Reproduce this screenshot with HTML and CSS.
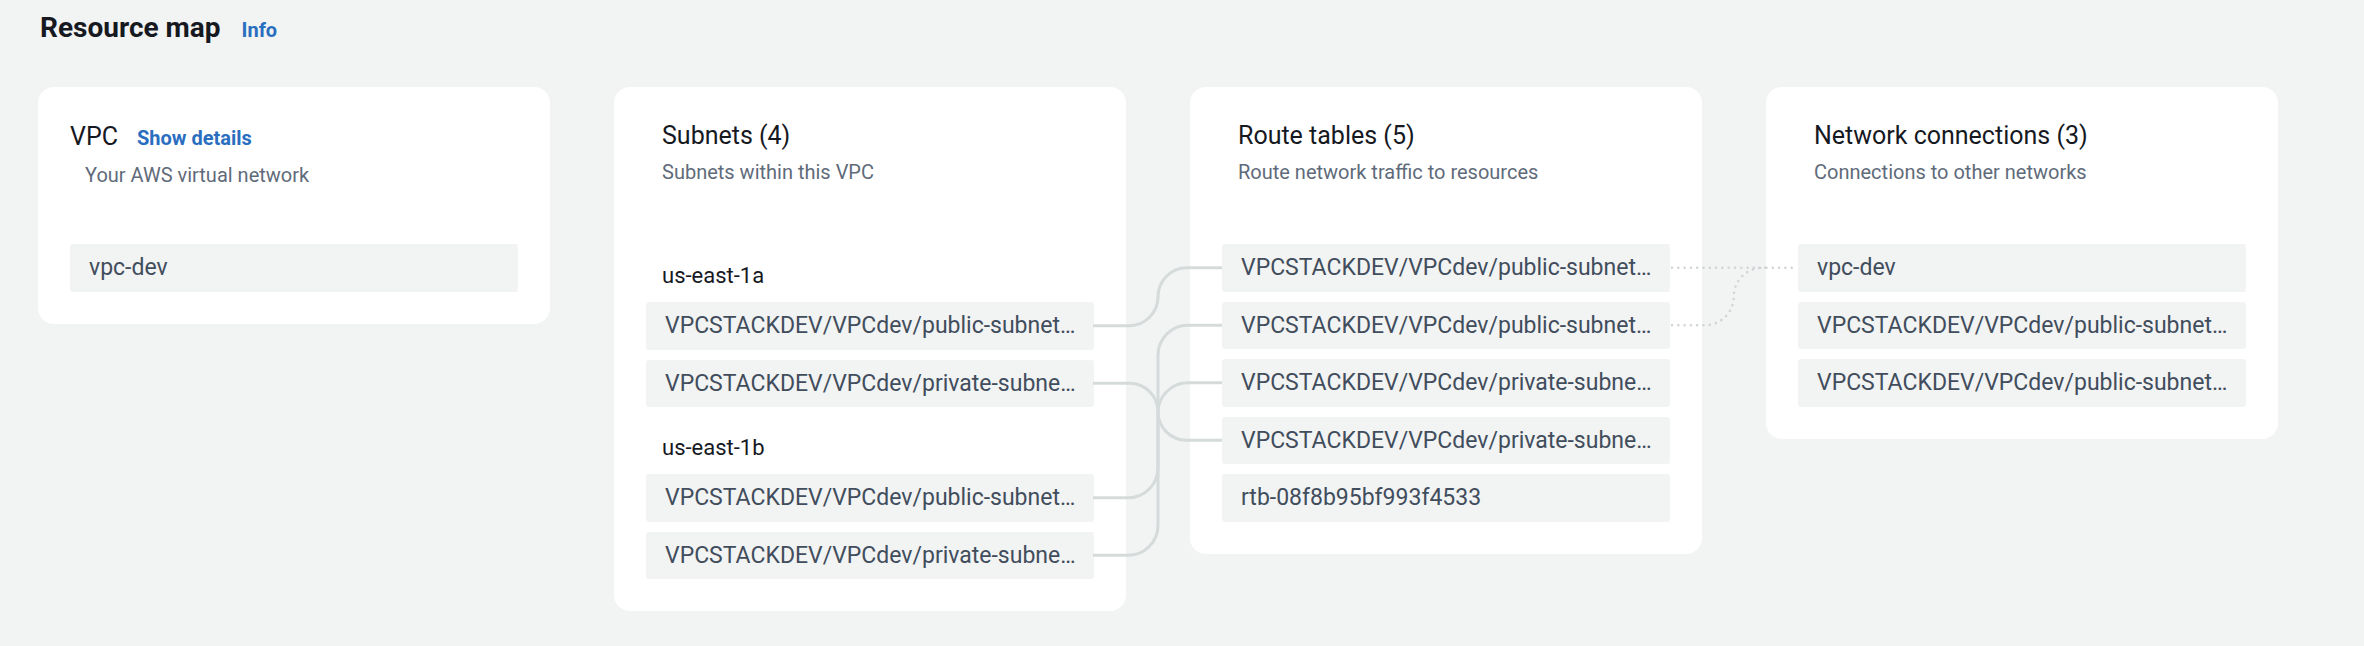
FILE: index.html
```html
<!DOCTYPE html>
<html lang="en">
<head>
<meta charset="utf-8">
<title>Resource map</title>
<link rel="stylesheet" href="styles.css">
</head>
<body>
<main class="page">
  <header class="page-head">
    <h1 class="page-title">Resource map</h1>
    <a class="info-link" href="#">Info</a>
  </header>

  <div class="map">
    <section class="card card-vpc">
      <div class="vpc-head">
        <h2 class="card-title">VPC</h2>
        <a class="link" href="#">Show details</a>
      </div>
      <p class="card-desc vpc-desc">Your AWS virtual network</p>
      <ul class="items">
        <li class="item">vpc-dev</li>
      </ul>
    </section>

    <section class="card">
      <div class="card-head">
        <h2 class="card-title">Subnets (4)</h2>
        <p class="card-desc">Subnets within this VPC</p>
      </div>
      <div class="zone zone-first">
        <h3 class="zone-label">us-east-1a</h3>
        <ul class="items zone-items">
          <li class="item">VPCSTACKDEV/VPCdev/public-subnet…</li>
          <li class="item">VPCSTACKDEV/VPCdev/private-subne…</li>
        </ul>
      </div>
      <div class="zone">
        <h3 class="zone-label">us-east-1b</h3>
        <ul class="items zone-items">
          <li class="item">VPCSTACKDEV/VPCdev/public-subnet…</li>
          <li class="item">VPCSTACKDEV/VPCdev/private-subne…</li>
        </ul>
      </div>
    </section>

    <section class="card">
      <div class="card-head">
        <h2 class="card-title">Route tables (5)</h2>
        <p class="card-desc">Route network traffic to resources</p>
      </div>
      <ul class="items">
        <li class="item">VPCSTACKDEV/VPCdev/public-subnet…</li>
        <li class="item">VPCSTACKDEV/VPCdev/public-subnet…</li>
        <li class="item">VPCSTACKDEV/VPCdev/private-subne…</li>
        <li class="item">VPCSTACKDEV/VPCdev/private-subne…</li>
        <li class="item">rtb-08f8b95bf993f4533</li>
      </ul>
    </section>

    <section class="card">
      <div class="card-head">
        <h2 class="card-title">Network connections (3)</h2>
        <p class="card-desc">Connections to other networks</p>
      </div>
      <ul class="items">
        <li class="item">vpc-dev</li>
        <li class="item">VPCSTACKDEV/VPCdev/public-subnet…</li>
        <li class="item">VPCSTACKDEV/VPCdev/public-subnet…</li>
      </ul>
    </section>
  </div>

  <svg class="links" viewBox="0 0 2364 646" width="2364" height="646" aria-hidden="true">
    <g class="solid">
      <path d="M1093 325.75 H1129 A29 29 0 0 0 1158 296.75 A29 29 0 0 1 1187 267.75 H1222"/>
      <path d="M1093 383.25 H1129.5 A28.5 28.5 0 0 1 1158 411.75 A28.5 28.5 0 0 0 1186.5 440.25 H1222"/>
      <path d="M1093 497.75 H1128 A30 30 0 0 0 1158 467.75 V355.25 A30 30 0 0 1 1188 325.25 H1222"/>
      <path d="M1093 555.25 H1128 A30 30 0 0 0 1158 525.25 V412.75 A30 30 0 0 1 1188 382.75 H1222"/>
    </g>
    <g class="dotted">
      <path d="M1672 267.75 H1797"/>
      <path d="M1672 325.25 H1705 A28.75 28.75 0 0 0 1733.75 296.5 A28.75 28.75 0 0 1 1762.5 267.75 H1770"/>
    </g>
  </svg>
</main>
</body>
</html>
```

FILE: styles.css
```css
* {
  box-sizing: border-box;
}

body {
  margin: 0;
  background: #f2f3f3;
  font-family: Roboto, "Open Sans", "Liberation Sans", sans-serif;
  color: #16191f;
}

.page {
  position: relative;
  width: 2364px;
  height: 646px;
  overflow: hidden;
}

.page-head {
  display: flex;
  align-items: baseline;
  gap: 21px;
  padding: 11px 0 0 40px;
}

.page-title {
  margin: 0;
  font-size: 28px;
  line-height: 34px;
  font-weight: 700;
  color: #16191f;
}

.info-link,
.link {
  color: #2a6ebf;
  font-weight: 700;
  font-size: 20px;
  text-decoration: none;
}

.map {
  display: grid;
  grid-template-columns: repeat(4, 512px);
  column-gap: 64px;
  align-items: start;
  margin-top: 42px;
  padding-left: 38px;
}

.card {
  background: #ffffff;
  border-radius: 16px;
  padding: 34px 32px 32px;
}

.card-head {
  padding-left: 16px;
}

.card-title {
  margin: 0;
  font-size: 25px;
  line-height: 30px;
  font-weight: 400;
  color: #16191f;
}

.card-desc {
  margin: 9px 0 0;
  font-size: 20px;
  line-height: 24px;
  color: #5f6b7a;
}

.vpc-head {
  display: flex;
  align-items: baseline;
  gap: 19px;
  margin-top: 1px;
}

.vpc-desc {
  margin-top: 11px;
  padding-left: 15px;
}

.items {
  list-style: none;
  margin: 60px 0 0;
  padding: 0;
  display: flex;
  flex-direction: column;
  gap: 10px;
}

.card-vpc .items {
  margin-top: 57px;
}

.item {
  height: 47.5px;
  line-height: 47.5px;
  padding: 0 8px 0 19px;
  background: #f2f3f3;
  border-radius: 3px;
  font-size: 23px;
  color: #414d5c;
  white-space: nowrap;
  overflow: hidden;
  text-overflow: ellipsis;
}

.zone {
  margin-top: 26.5px;
}

.zone-first {
  margin-top: 77.5px;
}

.zone-label {
  margin: 0;
  padding-left: 16px;
  font-size: 22px;
  line-height: 28px;
  font-weight: 400;
  color: #16191f;
}

.zone-items {
  margin-top: 12.5px;
}

.links {
  position: absolute;
  top: 0;
  left: 0;
  pointer-events: none;
}

.links path {
  fill: none;
}

.solid path {
  stroke: #d5dbdb;
  stroke-width: 3;
}

.dotted path {
  stroke: #d1d5d7;
  stroke-width: 2.6;
  stroke-linecap: round;
  stroke-dasharray: 0 6.3;
}
```
